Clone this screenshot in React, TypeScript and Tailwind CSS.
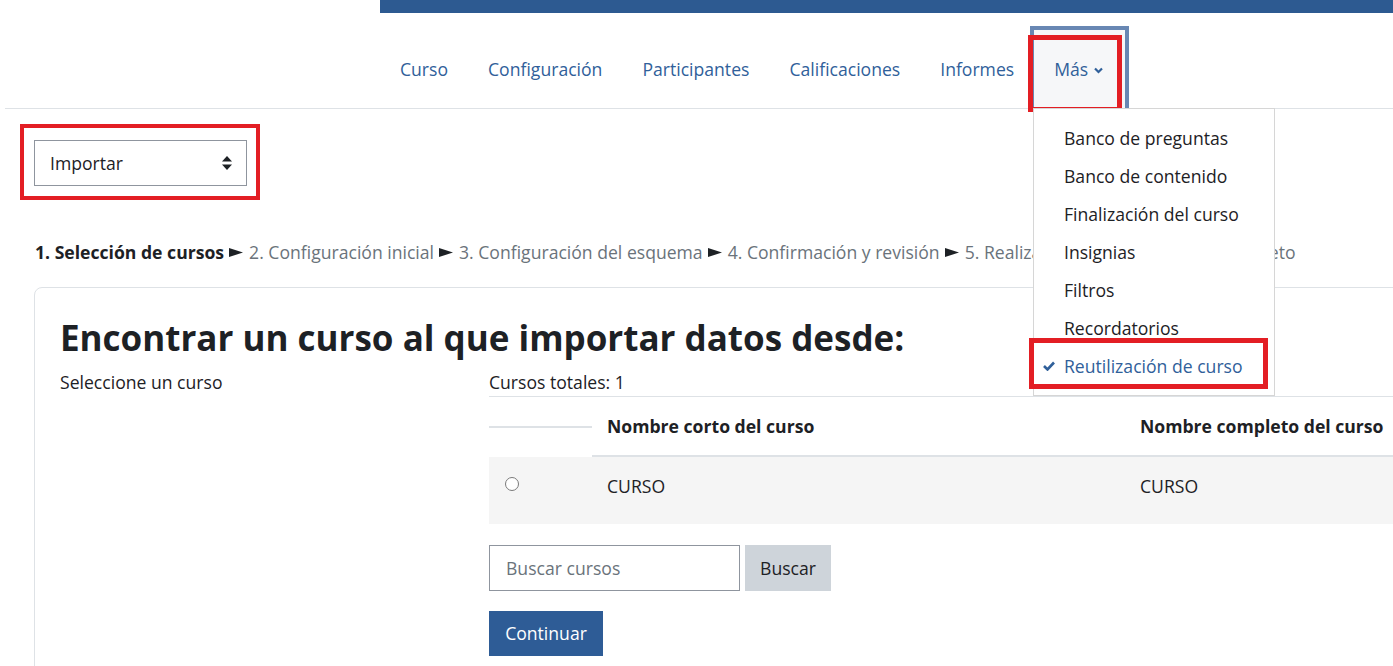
import React from "react";

const navItems = ["Curso", "Configuración", "Participantes", "Calificaciones", "Informes"];

const menuItems = [
  "Banco de preguntas",
  "Banco de contenido",
  "Finalización del curso",
  "Insignias",
  "Filtros",
  "Recordatorios",
];

const steps = [
  "2. Configuración inicial",
  "3. Configuración del esquema",
  "4. Confirmación y revisión",
  "5. Realizar la importación",
  "6. Completo",
];

const Arrow = () => (
  <svg width="14" height="9" viewBox="0 0 14 9" className="ml-[5px] mr-[6px] shrink-0">
    <path d="M0 0 L14 4.5 L0 9 Z" fill="#1d2125" />
  </svg>
);

export default function App() {
  return (
    <div className="relative h-[666px] w-[1393px] overflow-hidden bg-white font-['Open_Sans',sans-serif] text-[17.6px] text-[#1d2125]">
      <div className="ml-[380px] h-[13px] bg-[#2d5a91]" />

      {/* secondary navigation */}
      <nav className="ml-[5px] flex h-[96px] items-end border-b border-[#dee2e6] pl-[375px]">
        {navItems.map((item) => (
          <a key={item} className="flex h-[78px] items-center px-[20px] pt-[1px] text-[#30609a]">
            {item}
          </a>
        ))}
        <div className="flex h-[78px] w-[91px] items-center gap-[6px] bg-[#f6f7f9] pl-[20px] pt-[1px] text-[#30609a] outline-[4px] outline-[#6887b3]">
          <span>Más</span>
          <svg width="9" height="7" viewBox="0 0 9 7" className="mt-[2px]">
            <path d="M1 1.5 L4.5 5 L8 1.5" fill="none" stroke="#30609a" strokeWidth="2.2" />
          </svg>
        </div>
      </nav>
      <div className="absolute left-[1028px] top-[35px] h-[77px] w-[94px] border-[5px] border-[#e31e24]" />

      {/* action select */}
      <div className="ml-[20px] mt-[15px] h-[76px] w-[240px] border-[4px] border-[#e31e24] pl-[10px] pt-[12px]">
        <div className="flex h-[46px] w-[213px] items-center justify-between border border-[#8f959e] pl-[15px] pr-[14px]">
          <span className="text-[#1d2125]">Importar</span>
          <svg width="10" height="14" viewBox="0 0 10 14">
            <path d="M5 0 L10 5.5 H0 Z" fill="#1d2125" />
            <path d="M5 14 L10 8.5 H0 Z" fill="#1d2125" />
          </svg>
        </div>
      </div>

      {/* import stages */}
      <div className="ml-[35px] mt-[39px] flex h-[26px] items-center whitespace-nowrap leading-[26px]">
        <span className="font-bold">1. Selección de cursos</span>
        {steps.map((s) => (
          <React.Fragment key={s}>
            <Arrow />
            <span className="text-[#6a737b]">{s}</span>
          </React.Fragment>
        ))}
      </div>

      {/* card */}
      <div className="ml-[34px] mt-[22px] h-[420px] w-[1420px] rounded-[8px] border border-[#dee2e6] px-[25px] pt-[29px]">
        <h2 className="text-[35px] font-bold leading-[41px] text-[#1d2125]">
          Encontrar un curso al que importar datos desde:
        </h2>
        <div className="mt-[11px] flex">
          <div className="w-[429px] leading-[26px]">Seleccione un curso</div>
          <div className="flex-1">
            <div className="h-[27px] leading-[26px]">Cursos totales: 1</div>
            <div className="border-t border-[#dee2e6]">
              <div className="flex h-[60px] items-center font-bold">
                <div className="flex h-full w-[103px] items-center">
                  <div className="h-[2px] w-full bg-[#dee2e6]" />
                </div>
                <div className="flex h-full w-[533px] items-center border-b-2 border-[#dee2e6] pl-[15px]">
                  Nombre corto del curso
                </div>
                <div className="flex h-full flex-1 items-center border-b-2 border-[#dee2e6] pl-[15px]">
                  Nombre completo del curso
                </div>
              </div>
              <div className="flex h-[67px] bg-[#f5f5f5] pt-[16px] leading-[26px]">
                <div className="w-[103px] pl-[16px] pt-[4px]">
                  <div className="h-[14px] w-[14px] rounded-full border border-[#7a7a7a] bg-white" />
                </div>
                <div className="w-[533px] pl-[15px]">CURSO</div>
                <div className="flex-1 pl-[15px]">CURSO</div>
              </div>
            </div>
            <div className="mt-[21px] flex gap-[5px]">
              <div className="flex h-[46px] w-[251px] items-center border border-[#8f959e] pl-[16px] text-[#6a737b]">
                Buscar cursos
              </div>
              <div className="flex h-[46px] w-[86px] items-center justify-center bg-[#ced4da]">Buscar</div>
            </div>
            <div className="mt-[20px] flex h-[45px] w-[114px] items-center justify-center bg-[#2e5c96] text-white">
              Continuar
            </div>
          </div>
        </div>
      </div>

      {/* dropdown menu */}
      <div className="absolute left-[1033px] top-[108px] h-[288px] w-[242px] border border-[#d6d6d6] bg-white pt-[10px]">
        {menuItems.map((m) => (
          <div key={m} className="flex h-[38px] items-center pl-[30px] text-[#1d2125]">
            {m}
          </div>
        ))}
        <div className="relative flex h-[38px] items-center pl-[30px] text-[#30609a]">
          <svg width="12" height="10" viewBox="0 0 12 10" className="absolute left-[9px] top-[14px]">
            <path d="M1 5 L4.5 8.5 L11 1.5" fill="none" stroke="#30609a" strokeWidth="2.6" />
          </svg>
          Reutilización de curso
        </div>
      </div>
      <div className="absolute left-[1029px] top-[338px] h-[51px] w-[239px] border-[5px] border-[#e31e24]" />
    </div>
  );
}
